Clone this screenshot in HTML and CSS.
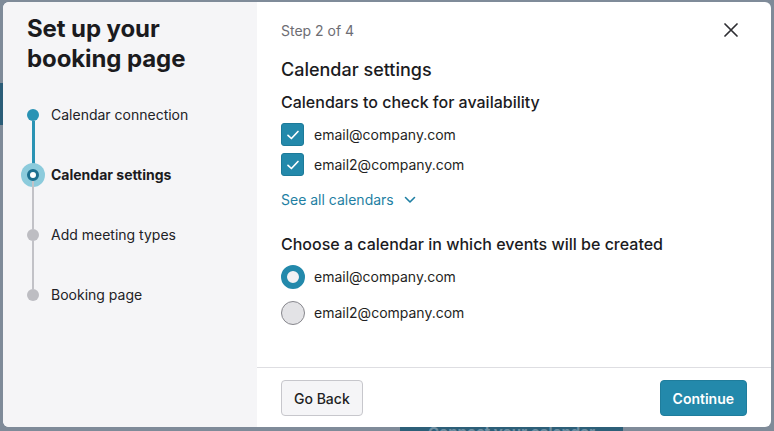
FILE: index.html
```html
<!DOCTYPE html>
<html lang="en">
<head>
<meta charset="utf-8">
<title>Set up your booking page</title>
<link rel="stylesheet" href="styles.css">
</head>
<body>
<div class="app">
  <div class="app-strip"></div>
  <div class="app-cta">Connect your calendar</div>
</div>
<div class="overlay">
  <div class="modal">
    <aside class="side">
      <h1 class="side-title">Set up your booking page</h1>
      <ol class="steps">
        <li class="step done first">
          <span class="marker"><span class="seg seg-top"></span><span class="dot"></span><span class="seg seg-bottom"></span></span>
          <span class="step-label">Calendar connection</span>
        </li>
        <li class="step current">
          <span class="marker"><span class="seg seg-top"></span><span class="dot"></span><span class="seg seg-bottom"></span></span>
          <span class="step-label">Calendar settings</span>
        </li>
        <li class="step">
          <span class="marker"><span class="seg seg-top"></span><span class="dot"></span><span class="seg seg-bottom"></span></span>
          <span class="step-label">Add meeting types</span>
        </li>
        <li class="step last">
          <span class="marker"><span class="seg seg-top"></span><span class="dot"></span><span class="seg seg-bottom"></span></span>
          <span class="step-label">Booking page</span>
        </li>
      </ol>
    </aside>
    <section class="main">
      <div class="body">
        <div class="header">
          <span class="step-count">Step 2 of 4</span>
          <button class="close" aria-label="Close">
            <svg width="14" height="14" viewBox="0 0 14 14"><path d="M1 1 L13 13 M13 1 L1 13" stroke="#2f2f33" stroke-width="1.7" fill="none" stroke-linecap="round"/></svg>
          </button>
        </div>
        <h2 class="title">Calendar settings</h2>
        <h3 class="subtitle">Calendars to check for availability</h3>
        <div class="checks">
          <label class="option">
            <span class="checkbox"><svg width="16" height="16" viewBox="0 0 16 16"><path d="M3 8.3 L6.4 11.5 L13 4.5" stroke="#fff" stroke-width="1.7" fill="none" stroke-linecap="round" stroke-linejoin="round"/></svg></span>
            <span>email@company.com</span>
          </label>
          <label class="option">
            <span class="checkbox"><svg width="16" height="16" viewBox="0 0 16 16"><path d="M3 8.3 L6.4 11.5 L13 4.5" stroke="#fff" stroke-width="1.7" fill="none" stroke-linecap="round" stroke-linejoin="round"/></svg></span>
            <span>email2@company.com</span>
          </label>
        </div>
        <a class="see-all" href="#">See all calendars
          <svg width="12" height="8" viewBox="0 0 12 8"><path d="M1.5 1.5 L6 6 L10.5 1.5" stroke="#1f7fa3" stroke-width="1.6" fill="none" stroke-linecap="round" stroke-linejoin="round"/></svg>
        </a>
        <h3 class="subtitle second">Choose a calendar in which events will be created</h3>
        <div class="radios">
          <label class="option">
            <span class="radio checked"></span>
            <span>email@company.com</span>
          </label>
          <label class="option">
            <span class="radio"></span>
            <span>email2@company.com</span>
          </label>
        </div>
      </div>
      <footer class="footer">
        <button class="btn btn-secondary">Go Back</button>
        <button class="btn btn-primary">Continue</button>
      </footer>
    </section>
  </div>
</div>
</body>
</html>
```

FILE: styles.css
```css
* { box-sizing: border-box; }

html, body {
  margin: 0;
  padding: 0;
  width: 774px;
  height: 431px;
  overflow: hidden;
}

body {
  background: #7f8b99;
  font-family: Inter, "Noto Sans", "Liberation Sans", sans-serif;
  color: #1d1d20;
  position: relative;
}

.app {
  width: 774px;
  height: 431px;
  position: relative;
  overflow: hidden;
}

.app-strip {
  position: absolute;
  left: 0;
  top: 83px;
  width: 6px;
  height: 42px;
  background: #2b5d78;
}

.app-cta {
  position: absolute;
  left: 400px;
  top: 424px;
  width: 223px;
  height: 30px;
  background: #2d5f78;
  color: #6f8fa2;
  font-size: 15px;
  line-height: 18px;
  font-weight: 700;
  text-align: center;
}

.overlay {
  position: absolute;
  inset: 0;
  padding: 2px 3px 4px 3px;
}

.modal {
  width: 768px;
  height: 425px;
  display: flex;
  background: #fff;
  border-radius: 6px;
  overflow: hidden;
}

/* Sidebar */
.side {
  width: 254px;
  flex: none;
  background: #f5f5f7;
  padding: 12px 0 0 24px;
}

.side-title {
  margin: 0;
  font-size: 24px;
  line-height: 30px;
  font-weight: 700;
  letter-spacing: -0.1px;
  color: #1b1b1e;
  width: 180px;
}

.steps {
  list-style: none;
  margin: 11px 0 0 0;
  padding: 0;
}

.step {
  height: 60px;
  display: flex;
  align-items: center;
}

.marker {
  width: 12px;
  height: 60px;
  display: flex;
  flex-direction: column;
  align-items: center;
  margin-right: 12px;
}

.seg {
  flex: 1;
  width: 2px;
  background: #c2c2c7;
}

.first .seg-top,
.last .seg-bottom {
  background: transparent;
}

.done .seg-bottom,
.current .seg-top {
  background: #2a93b4;
  width: 3px;
}

.dot {
  width: 12px;
  height: 12px;
  border-radius: 50%;
  background: #bdbdc2;
  flex: none;
}

.done .dot {
  background: #2a93b4;
}

.current .dot {
  width: 12px;
  height: 12px;
  background: #fff;
  border: 3px solid #1c6f8f;
  box-shadow: 0 0 0 6px #8ccbdc;
}

.step-label {
  font-size: 14px;
  line-height: 20px;
  color: #222226;
}

.current .step-label {
  font-weight: 700;
  color: #1b1b1e;
}

/* Main */
.main {
  flex: 1;
  display: flex;
  flex-direction: column;
}

.body {
  flex: 1;
  padding: 19px 24px 0 24px;
}

.header {
  display: flex;
  justify-content: space-between;
  align-items: center;
  height: 20px;
}

.step-count {
  font-size: 14px;
  line-height: 20px;
  color: #6d6d73;
}

.close {
  width: 32px;
  height: 32px;
  margin-top: -2px;
  border: 0;
  background: transparent;
  padding: 0;
  display: flex;
  align-items: center;
  justify-content: center;
}

.title {
  margin: 17px 0 0 0;
  font-size: 18px;
  line-height: 24px;
  font-weight: 500;
  color: #1b1b1e;
}

.subtitle {
  margin: 9px 0 0 0;
  font-size: 16px;
  line-height: 22px;
  font-weight: 500;
  color: #1b1b1e;
}

.subtitle.second {
  margin-top: 23px;
}

.checks {
  margin-top: 10px;
  display: flex;
  flex-direction: column;
  gap: 7px;
}

.option {
  display: flex;
  align-items: center;
  gap: 10px;
  font-size: 14px;
  line-height: 20px;
  color: #1f1f23;
}

.checkbox {
  width: 23px;
  height: 23px;
  border-radius: 3px;
  background: #2389ab;
  border: 1px solid #1c7a99;
  display: flex;
  align-items: center;
  justify-content: center;
  flex: none;
}

.see-all {
  margin-top: 14px;
  display: inline-flex;
  align-items: center;
  gap: 10px;
  font-size: 14px;
  line-height: 20px;
  color: #1f7fa3;
  text-decoration: none;
}

.radios {
  margin-top: 10px;
  display: flex;
  flex-direction: column;
  gap: 12px;
}

.radios .option {
  gap: 9px;
}

.radio {
  width: 24px;
  height: 24px;
  border-radius: 50%;
  background: #e3e3e6;
  border: 1px solid #87878d;
  flex: none;
}

.radio.checked {
  background: #f2f2f4;
  border: 6px solid #2389ab;
}

.footer {
  height: 60px;
  border-top: 1px solid #dedee2;
  display: flex;
  justify-content: space-between;
  align-items: flex-start;
  padding: 12px 24px 0 24px;
}

.btn {
  height: 36px;
  border-radius: 4px;
  font-family: inherit;
  font-size: 14px;
  font-weight: 500;
  padding: 0 12px;
  white-space: nowrap;
  cursor: pointer;
}

.btn-secondary {
  background: #f5f5f7;
  border: 1px solid #c7c7cc;
  color: #1f1f23;
  min-width: 81px;
}

.btn-primary {
  background: #2389ab;
  border: 1px solid #1f7d9c;
  color: #fff;
  font-weight: 600;
  min-width: 87px;
}
```
